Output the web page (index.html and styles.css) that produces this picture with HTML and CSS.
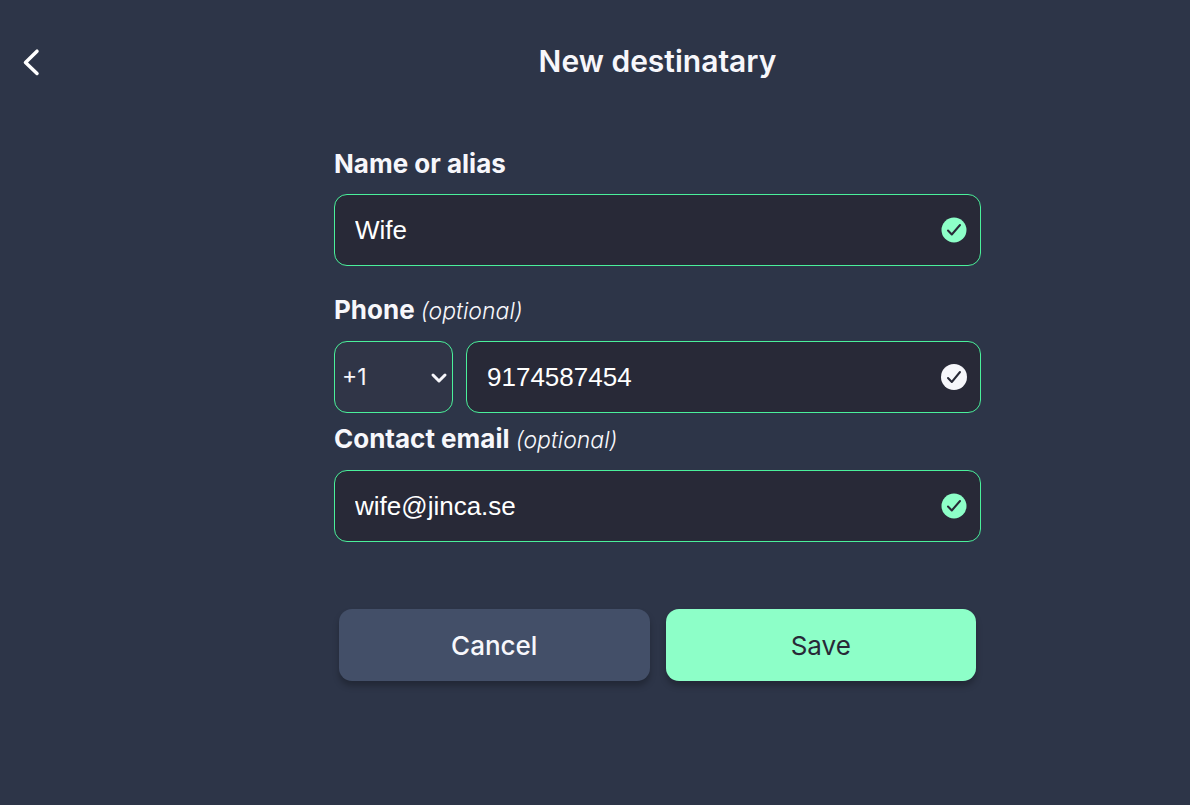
FILE: index.html
```html
<!DOCTYPE html>
<html lang="en">
<head>
    <meta charset="UTF-8">
    <meta name="viewport" content="width=device-width, initial-scale=1.0">
    <title>New destinatary</title>
    <link rel="stylesheet" href="styles.css">
</head>

<body>
    <div class="page">
        <button class="back" type="button" aria-label="Back">
            <svg width="18" height="28" viewBox="0 0 18 28" fill="none" stroke="currentColor" stroke-width="3.500" stroke-linecap="round" stroke-linejoin="round">
                <path d="M15 3.200 L3.500 14.500 L15 25.500"/>
            </svg>
        </button>
        <main class="content">
            <h1 class="title">New destinatary</h1>
            <form class="form">
                <div class="field">
                    <label for="name">Name or alias</label>
                    <div class="input-wrap">
                        <input id="name" type="text" value="Wife">
                        <svg class="check" viewBox="0 0 26 26">
                            <circle cx="13" cy="13" r="12.500"/>
                            <path d="M7 13.500 L10.800 17.500 L19 8"/>
                        </svg>
                    </div>
                </div>
                <div class="field field-phone">
                    <label for="phone">Phone <em>(optional)</em></label>
                    <div class="phone-row">
                        <div class="select-wrap">
                            <select id="prefix" aria-label="Country code">
                                <option>+1</option>
                                <option>+34</option>
                                <option>+44</option>
                            </select>
                            <svg class="chevron" width="18" height="12" viewBox="0 0 18 12">
                                <path d="M3 3 L9 9 L15 3"/>
                            </svg>
                        </div>
                        <div class="input-wrap">
                            <input id="phone" type="tel" value="9174587454">
                            <svg class="check check-light" viewBox="0 0 26 26">
                                <circle cx="13" cy="13" r="13"/>
                                <path d="M7 14 L10.800 18 L19 8"/>
                            </svg>
                        </div>
                    </div>
                </div>
                <div class="field">
                    <label for="email">Contact email <em>(optional)</em></label>
                    <div class="input-wrap">
                        <input id="email" type="email" value="wife@jinca.se">
                        <svg class="check" viewBox="0 0 26 26">
                            <circle cx="13" cy="13" r="12.500"/>
                            <path d="M7 13.500 L10.800 17.500 L19 8"/>
                        </svg>
                    </div>
                </div>
                <div class="actions">
                    <button class="btn btn-cancel" type="button">Cancel</button>
                    <button class="btn btn-save" type="submit">Save</button>
                </div>
            </form>
        </main>
    </div>
</body>
</html>
```

FILE: styles.css
```css
* {
    margin: 0;
    padding: 0;
    box-sizing: border-box;
}

body {
    min-height: 100vh;
    font-family: Inter, sans-serif;
    background: #2d3548;
    color: #f7f7fb;
}

.page {
    display: grid;
    grid-template-columns: 125px 1fr;
}

.back {
    justify-self: start;
    align-self: start;
    display: flex;
    margin-top: 48px;
    margin-left: 22px;
    background: none;
    border: none;
    color: #ffffff;
    cursor: pointer;
}

.content {
    display: flex;
    flex-direction: column;
    align-items: center;
    padding-top: 41px;
}

.title {
    font-size: 30px;
    font-weight: 600;
    line-height: 40px;
    margin-bottom: 67px;
}

.form {
    width: 100%;
    max-width: 647px;
}

.field {
    margin-bottom: 28px;
}

.field-phone {
    margin-bottom: 10px;
}

.field label {
    display: block;
    font-size: 26px;
    font-weight: 700;
    line-height: 32px;
    margin-bottom: 14px;
}

.field em {
    font-size: 23px;
    font-weight: 300;
}

.input-wrap {
    position: relative;
    flex: 1;
}

.field input {
    display: block;
    width: 100%;
    height: 72px;
    padding: 0 60px 0 20px;
    background: #282937;
    border: 1px solid #4af09b;
    border-radius: 13px;
    color: #ffffff;
    font-family: "Liberation Sans", Arial, sans-serif;
    font-size: 26px;
    outline: none;
}

.check {
    position: absolute;
    top: 23px;
    right: 14px;
    width: 26px;
    height: 26px;
    fill: #8dffc8;
}

.check-light {
    fill: #f7f7fb;
}

.check path,
.chevron path {
    fill: none;
    stroke: #282937;
    stroke-width: 2;
    stroke-linecap: round;
    stroke-linejoin: round;
}

.phone-row {
    display: flex;
    gap: 13px;
}

.select-wrap {
    position: relative;
    width: 119px;
}

.select-wrap select {
    display: block;
    appearance: none;
    width: 100%;
    height: 72px;
    padding-left: 7px;
    background: #303547;
    border: 1px solid #4af09b;
    border-radius: 13px;
    color: #f7f7fb;
    font-family: Inter, sans-serif;
    font-size: 23px;
    outline: none;
}

.chevron {
    position: absolute;
    top: 31px;
    right: 5px;
    pointer-events: none;
}

.chevron path {
    stroke: #f7f7fb;
    stroke-width: 3;
}

.actions {
    display: flex;
    gap: 16px;
    margin-top: 67px;
    padding: 0 5px;
}

.btn {
    flex: 1;
    height: 72px;
    border: none;
    border-radius: 13px;
    box-shadow: 0 5px 6px rgba(0, 0, 0, 0.25);
    font-family: Inter, sans-serif;
    font-size: 26px;
    cursor: pointer;
}

.btn-cancel {
    background: #434f68;
    color: #f7f7fb;
    font-weight: 500;
}

.btn-save {
    background: #8dffc8;
    color: #282937;
    font-weight: 400;
}
```
